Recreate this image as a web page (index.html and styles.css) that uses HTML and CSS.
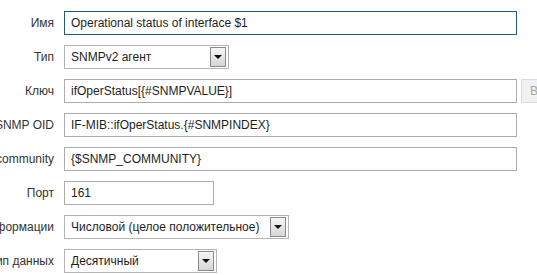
FILE: index.html
```html
<!DOCTYPE html>
<html lang="ru">
<head>
    <meta charset="UTF-8">
    <meta name="viewport" content="width=device-width, initial-scale=1.0">
    <title>Прототип элемента данных</title>
    <link rel="stylesheet" href="styles.css">
</head>
<body>
    <form class="item-form">
        <label class="form-label" for="name">Имя</label>
        <div class="form-field">
            <input type="text" id="name" class="text-input wide focused" value="Operational status of interface $1">
        </div>

        <label class="form-label">Тип</label>
        <div class="form-field">
            <div class="combo type-combo">
                <span class="combo-value">SNMPv2 агент</span>
                <span class="combo-btn"><span class="arrow"></span></span>
            </div>
        </div>

        <label class="form-label" for="key">Ключ</label>
        <div class="form-field">
            <input type="text" id="key" class="text-input wide" value="ifOperStatus[{#SNMPVALUE}]">
            <button type="button" class="select-btn" disabled>Выбрать</button>
        </div>

        <label class="form-label" for="oid">SNMP OID</label>
        <div class="form-field">
            <input type="text" id="oid" class="text-input wide" value="IF-MIB::ifOperStatus.{#SNMPINDEX}">
        </div>

        <label class="form-label" for="community">SNMP community</label>
        <div class="form-field">
            <input type="text" id="community" class="text-input wide" value="{$SNMP_COMMUNITY}">
        </div>

        <label class="form-label" for="port">Порт</label>
        <div class="form-field">
            <input type="text" id="port" class="text-input port" value="161">
        </div>

        <label class="form-label">Тип информации</label>
        <div class="form-field">
            <div class="combo info-combo">
                <span class="combo-value">Числовой (целое положительное)</span>
                <span class="combo-btn"><span class="arrow"></span></span>
            </div>
        </div>

        <label class="form-label">Тип данных</label>
        <div class="form-field">
            <div class="combo data-combo">
                <span class="combo-value">Десятичный</span>
                <span class="combo-btn"><span class="arrow"></span></span>
            </div>
        </div>
    </form>
</body>
</html>
```

FILE: styles.css
```css
html, body {
    overflow: hidden;
}
body {
    margin: 0;
    padding: 0;
    background-color: #fff;
    font-family: "Liberation Sans", Arial, sans-serif;
    font-size: 12px;
    color: #2b2b2b;
}
.item-form {
    display: grid;
    grid-template-columns: 54px auto;
    column-gap: 10px;
    row-gap: 10px;
    padding-top: 11px;
}
.form-label {
    display: flex;
    justify-content: flex-end;
    align-items: center;
    white-space: nowrap;
    height: 24px;
    color: #333;
}
.form-field {
    display: flex;
    align-items: center;
    gap: 4px;
    height: 24px;
}
.text-input {
    height: 24px;
    box-sizing: border-box;
    margin: 0;
    padding: 0 6px;
    border: 1px solid #acacac;
    border-radius: 0;
    font-family: inherit;
    font-size: 12px;
    color: #1e1e1e;
    background-color: #fff;
    outline: none;
}
.text-input.wide {
    width: 453px;
}
.text-input.port {
    width: 150px;
}
.text-input.focused {
    border-color: #235a78;
}
.select-btn {
    flex: none;
    height: 24px;
    box-sizing: border-box;
    margin: 0;
    padding: 0 8px;
    border: 1px solid #dcdcdc;
    border-radius: 0;
    background-color: #f1f1f1;
    font-family: inherit;
    font-size: 12px;
    color: #a8a8a8;
}
.combo {
    display: flex;
    align-items: center;
    height: 24px;
    box-sizing: border-box;
    padding: 1px 2px 1px 6px;
    border: 1px solid #b4b4b4;
    background-color: #fff;
    color: #1e1e1e;
}
.combo-value {
    flex: 1;
    white-space: nowrap;
}
.combo-btn {
    display: flex;
    justify-content: center;
    align-items: center;
    width: 16px;
    height: 20px;
    box-sizing: border-box;
    border: 1px solid #8a8a8a;
    background: linear-gradient(#f6f6f6, #d6d6d6);
}
.arrow {
    width: 0;
    height: 0;
    border-left: 4px solid transparent;
    border-right: 4px solid transparent;
    border-top: 4px solid #111;
}
.type-combo {
    width: 165px;
}
.info-combo {
    width: 225px;
}
.data-combo {
    width: 153px;
}
```
